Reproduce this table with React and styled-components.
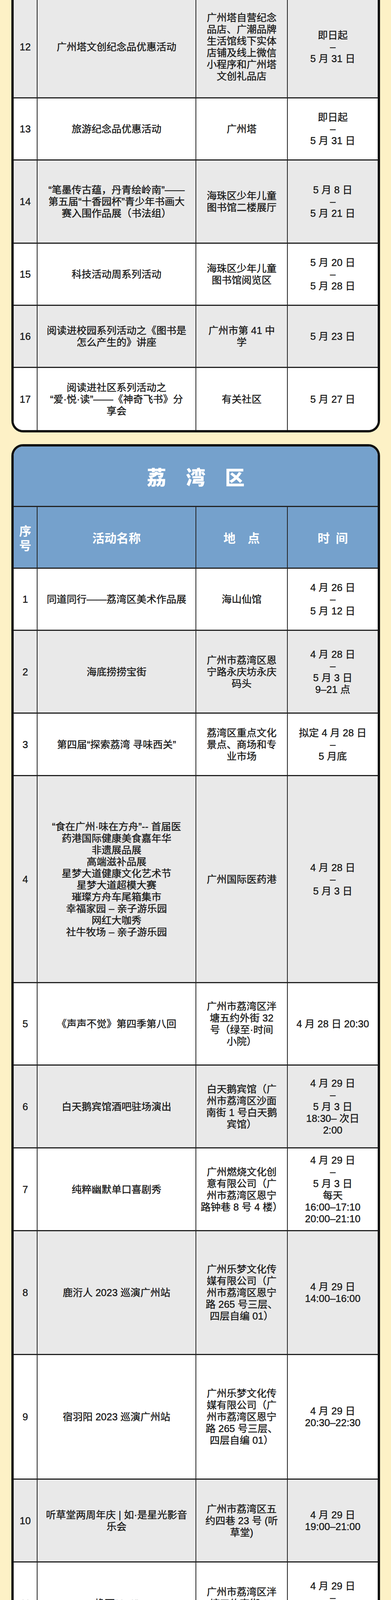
import React from 'react';
import styled, { createGlobalStyle, css } from 'styled-components';

const GlobalStyle = createGlobalStyle`
  html, body {
    margin: 0;
    padding: 0;
    background: #fdf1c6;
  }
  body {
    font-family: "Liberation Sans", "Noto Sans CJK SC", sans-serif;
    color: #1a1a1a;
  }
`;

const Page = styled.div`
  display: flex;
  flex-direction: column;
  gap: 30px;
  padding: 0 28px 40px 29px;
`;

const Card = styled.section`
  background: #fff;
  border: 6px solid #111;
  border-radius: 30px;
  overflow: hidden;

  ${props => props.$continued && css`
    margin-top: -10px;
    border-top: none;
    border-top-left-radius: 0;
    border-top-right-radius: 0;
  `}
`;

const DistrictTitle = styled.h2`
  margin: 0;
  height: 155px;
  box-sizing: border-box;
  display: flex;
  align-items: center;
  justify-content: center;
  background: #75a1cc;
  border-bottom: 3px solid #222;
  color: #fff;
  font-family: "Noto Sans CJK SC", sans-serif;
  font-size: 50px;
  font-weight: 900;
  white-space: pre;
`;

const Row = styled.div`
  display: grid;
  grid-template-columns: 61px 406px 234px 1fr;
  height: ${props => props.$h}px;
  box-sizing: border-box;
  border-bottom: ${props => (props.$last ? 'none' : '3px solid #222')};
  background: ${props => (props.$head ? '#75a1cc' : props.$shade ? '#e9e9e9' : '#fff')};
`;

const Cell = styled.div`
  display: flex;
  align-items: center;
  justify-content: center;
  text-align: center;
  white-space: pre;
  border-right: 2px solid #222;
  font-size: 25.5px;
  line-height: 30px;
  -webkit-text-stroke: 0.5px currentColor;

  &:last-child {
    border-right: none;
  }
`;

const HeadCell = styled(Cell)`
  color: #fff;
  font-family: "Noto Sans CJK SC", sans-serif;
  font-size: 31px;
  font-weight: 700;
  line-height: 37px;
  -webkit-text-stroke: 0;
`;

const haizhuRows = [
  {
    no: 12, h: 262,
    name: '广州塔文创纪念品优惠活动',
    place: '广州塔自营纪念\n品店、广潮品牌\n生活馆线下实体\n店铺及线上微信\n小程序和广州塔\n文创礼品店',
    time: '即日起\n–\n5 月 31 日'
  },
  { no: 13, h: 159, name: '旅游纪念品优惠活动', place: '广州塔', time: '即日起\n–\n5 月 31 日' },
  {
    no: 14, h: 213,
    name: '“笔墨传古蕴，丹青绘岭南”——\n第五届“十香园杯”青少年书画大\n赛入围作品展（书法组）',
    place: '海珠区少年儿童\n图书馆二楼展厅',
    time: '5 月 8 日\n–\n5 月 21 日'
  },
  { no: 15, h: 159, name: '科技活动周系列活动', place: '海珠区少年儿童\n图书馆阅览区', time: '5 月 20 日\n–\n5 月 28 日' },
  { no: 16, h: 159, name: '阅读进校园系列活动之《图书是\n怎么产生的》讲座', place: '广州市第 41 中\n学', time: '5 月 23 日' },
  { no: 17, h: 159, name: '阅读进社区系列活动之\n“爱·悦·读”——《神奇飞书》分\n享会', place: '有关社区', time: '5 月 27 日' }
];

const liwanRows = [
  { no: 1, h: 159, name: '同道同行——荔湾区美术作品展', place: '海山仙馆', time: '4 月 26 日\n–\n5 月 12 日' },
  { no: 2, h: 212, name: '海底捞捞宝街', place: '广州市荔湾区恩\n宁路永庆坊永庆\n码头', time: '4 月 28 日\n–\n5 月 3 日\n9–21 点' },
  { no: 3, h: 160, name: '第四届“探索荔湾 寻味西关”', place: '荔湾区重点文化\n景点、商场和专\n业市场', time: '拟定 4 月 28 日\n–\n5 月底' },
  {
    no: 4, h: 530,
    name: '“食在广州·味在方舟”-- 首届医\n药港国际健康美食嘉年华\n非遗展品展\n高端滋补品展\n星梦大道健康文化艺术节\n星梦大道超模大赛\n璀璨方舟车尾箱集市\n幸福家园 – 亲子游乐园\n网红大咖秀\n社牛牧场 – 亲子游乐园',
    place: '广州国际医药港',
    time: '4 月 28 日\n–\n5 月 3 日'
  },
  { no: 5, h: 211, name: '《声声不觉》第四季第八回', place: '广州市荔湾区泮\n塘五约外街 32\n号（绿至·时间\n小院）', time: '4 月 28 日 20:30' },
  { no: 6, h: 212, name: '白天鹅宾馆酒吧驻场演出', place: '白天鹅宾馆（广\n州市荔湾区沙面\n南街 1 号白天鹅\n宾馆）', time: '4 月 29 日\n–\n5 月 3 日\n18:30– 次日\n2:00' },
  { no: 7, h: 212, name: '纯粹幽默单口喜剧秀', place: '广州燃烧文化创\n意有限公司（广\n州市荔湾区恩宁\n路钟巷 8 号 4 楼）', time: '4 月 29 日\n–\n5 月 3 日\n每天\n16:00–17:10\n20:00–21:10' },
  { no: 8, h: 317, name: '鹿洐人 2023 巡演广州站', place: '广州乐梦文化传\n媒有限公司（广\n州市荔湾区恩宁\n路 265 号三层、\n四层自编 01）', time: '4 月 29 日\n14:00–16:00' },
  { no: 9, h: 319, name: '宿羽阳 2023 巡演广州站', place: '广州乐梦文化传\n媒有限公司（广\n州市荔湾区恩宁\n路 265 号三层、\n四层自编 01）', time: '4 月 29 日\n20:30–22:30' },
  { no: 10, h: 212, name: '听草堂两周年庆 | 如·是星光影音\n乐会', place: '广州市荔湾区五\n约四巷 23 号 (听\n草堂)', time: '4 月 29 日\n19:00–21:00' },
  { no: 11, h: 212, name: '檐下“4+1”', place: '广州市荔湾区泮\n塘五约直街 19\n号（和馆）', time: '4 月 29 日\n–\n5 月 3 日\n11:00–17:30' },
  { no: 12, h: 318, name: '笑果脱口秀 PLUS@ 平安大戏院', place: '广州市演出电影\n有限公司\n平安大戏院\n（广东省广州市\n荔湾区第十甫路\n125 号）', time: '4 月 29 日\n16:30–18:00\n20:00–21:30' },
  { no: 13, h: 317, name: 'MAO 自办派对 2023', place: '广州乐梦文化传\n媒有限公司\n（广州市荔湾区\n恩宁路 265 号\n三层、四层自编\n01）', time: '4 月 29 日\n–\n5 月 3 日\n23:00\n–\n次日凌晨\n02：00' },
  { no: 14, h: 348, name: '侨星渔村美食活动', place: '广州市侨星渔村\n饮食有限公司\n（广州市荔湾区\n侨星渔村）', time: '4 月 29 日\n–\n5 月 3 日\n每天\n11:00–14:00\n–\n17:00–21:00' }
];

const EventRows = ({ rows }) =>
  rows.map((row, index) => (
    <Row key={row.no} $h={row.h} $shade={row.no % 2 === 0} $last={index === rows.length - 1}>
      <Cell>{row.no}</Cell>
      <Cell>{row.name}</Cell>
      <Cell>{row.place}</Cell>
      <Cell>{row.time}</Cell>
    </Row>
  ));

const App = () => {
  return (
    <>
      <GlobalStyle />
      <Page>
        <Card $continued>
          <EventRows rows={haizhuRows} />
        </Card>

        <Card>
          <DistrictTitle>{'荔　湾　区'}</DistrictTitle>
          <Row $h={158} $head>
            <HeadCell>{'序\n号'}</HeadCell>
            <HeadCell>活动名称</HeadCell>
            <HeadCell>{'地　点'}</HeadCell>
            <HeadCell>{'时\u2002间'}</HeadCell>
          </Row>
          <EventRows rows={liwanRows} />
        </Card>
      </Page>
    </>
  );
};

export default App;
